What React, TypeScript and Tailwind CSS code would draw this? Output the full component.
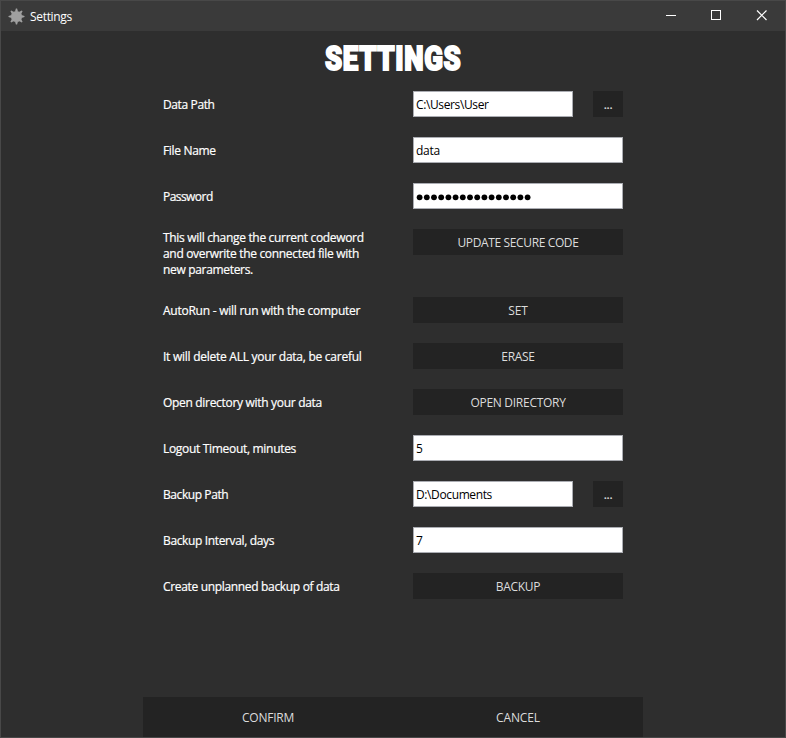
import React from 'react';

const settingRows = [
  { label: 'Data Path', kind: 'path', value: 'C:\\Users\\User', tracking: 'tracking-[-0.38px]', inner: 'tracking-[-0.38px]' },
  { label: 'File Name', kind: 'input', value: 'data', tracking: 'tracking-[-0.32px]', inner: 'tracking-[-0.3px]' },
  { label: 'Password', kind: 'password', value: '●●●●●●●●●●●●●●●●', tracking: 'tracking-[-0.55px]', inner: '' },
  {
    label: 'This will change the current codeword\nand overwrite the connected file with\nnew parameters.',
    kind: 'button', value: 'UPDATE SECURE CODE', tracking: 'tracking-[-0.32px]', inner: 'tracking-[-0.37px]',
  },
  { label: 'AutoRun - will run with the computer', kind: 'button', value: 'SET', tracking: 'tracking-[-0.25px]', inner: 'tracking-[-0.2px]' },
  { label: 'It will delete ALL your data, be careful', kind: 'button', value: 'ERASE', tracking: 'tracking-[-0.26px]', inner: 'tracking-[-0.3px]' },
  { label: 'Open directory with your data', kind: 'button', value: 'OPEN DIRECTORY', tracking: 'tracking-[-0.31px]', inner: 'tracking-[-0.28px]' },
  { label: 'Logout Timeout, minutes', kind: 'input', value: '5', tracking: 'tracking-[-0.31px]', inner: '' },
  { label: 'Backup Path', kind: 'path', value: 'D:\\Documents', tracking: 'tracking-[-0.42px]', inner: 'tracking-[-0.38px]' },
  { label: 'Backup Interval, days', kind: 'input', value: '7', tracking: 'tracking-[-0.36px]', inner: '' },
  { label: 'Create unplanned backup of data', kind: 'button', value: 'BACKUP', tracking: 'tracking-[-0.33px]', inner: 'tracking-[-0.3px]' },
];

function Field({ kind, value, inner }: { kind: string; value: string; inner: string }) {
  if (kind === 'button') {
    return (
      <button className="flex h-[26px] w-[210px] items-center justify-center bg-[#232323] pt-0.5 text-[#dcdcdc]">
        <span className={inner}>{value}</span>
      </button>
    );
  }
  return (
    <div className="flex w-[210px] justify-between">
      <div
        className={`flex h-[26px] items-center border border-[#abadb3] bg-white pt-0.5 pl-[2px] text-black ${
          kind === 'path' ? 'w-[160px]' : 'w-[210px]'
        }`}
      >
        {kind === 'password' ? (
          <svg width="118" height="8" className="overflow-visible">
            {value.split('').map((_, i) => (
              <circle key={i} cx={3.6 + i * 7.2} cy="4.3" r="2.9" />
            ))}
          </svg>
        ) : (
          <span className={inner}>{value}</span>
        )}
      </div>
      {kind === 'path' && (
        <button className="h-[26px] w-[30px] bg-[#232323] pt-0.5 text-[#dcdcdc]">
          <span className="tracking-[-0.3px] [-webkit-text-stroke:0.2px_#dcdcdc]">...</span>
        </button>
      )}
    </div>
  );
}

export default function App() {
  return (
    <div className="flex h-[738px] w-[786px] flex-col border border-[#484848] bg-[#2e2e2e] font-['Open_Sans','Noto_Sans',sans-serif] text-[12px] leading-4 text-white">
      <header className="flex h-[30px] shrink-0 items-center bg-[#3a3a3a] pl-[7px]">
        <svg width="17" height="17" viewBox="-8.5 -8.5 17 17" fill="#a0a0a0">
          <circle r="5.6" />
          <path d="M-.6-8H.6L1.5-5H-1.5ZM-.6 8H.6L1.5 5H-1.5ZM-8-.6V.6L-5 1.5V-1.5ZM8-.6V.6L5 1.5V-1.5Z" />
          <path d="M-.6-8H.6L1.5-5H-1.5ZM-.6 8H.6L1.5 5H-1.5ZM-8-.6V.6L-5 1.5V-1.5ZM8-.6V.6L5 1.5V-1.5Z" transform="rotate(45)" />
        </svg>
        <span className="ml-[5px] pt-px tracking-[-0.32px]">Settings</span>
        <div className="ml-auto flex">
          <svg width="135" height="30" fill="none" stroke="#fff">
            <path d="M16 14.5h10M61.5 9.5h9v9h-9z" shapeRendering="crispEdges" />
            <path d="M107 9.5l9.5 9.5M116.5 9.5l-9.5 9.5" strokeWidth="1.2" />
          </svg>
        </div>
      </header>
      <h1 className="flex h-[60px] shrink-0 items-center justify-center pb-[4px]">
        <span className="scale-x-[.82] font-['Roboto'] text-[33.5px] leading-none font-black tracking-[0.8px] [-webkit-text-stroke:1.9px_white]">
          SETTINGS
        </span>
      </h1>
      <main className="mx-auto flex w-[460px] flex-col gap-5">
        {settingRows.map((row) => (
          <div key={row.label} className="flex items-start justify-between">
            <div className="flex min-h-[26px] items-center whitespace-pre">
              <span className={`relative top-px [-webkit-text-stroke:0.2px_white] ${row.tracking}`}>{row.label}</span>
            </div>
            <Field kind={row.kind} value={row.value} inner={row.inner} />
          </div>
        ))}
      </main>
      <footer className="mx-auto mt-auto flex h-10 w-[500px] shrink-0 bg-[#232323] text-[#dcdcdc]">
        <button className="flex-1 pt-0.5 tracking-[-0.25px]">CONFIRM</button>
        <button className="flex-1 pt-0.5 tracking-[-0.1px]">CANCEL</button>
      </footer>
    </div>
  );
}
